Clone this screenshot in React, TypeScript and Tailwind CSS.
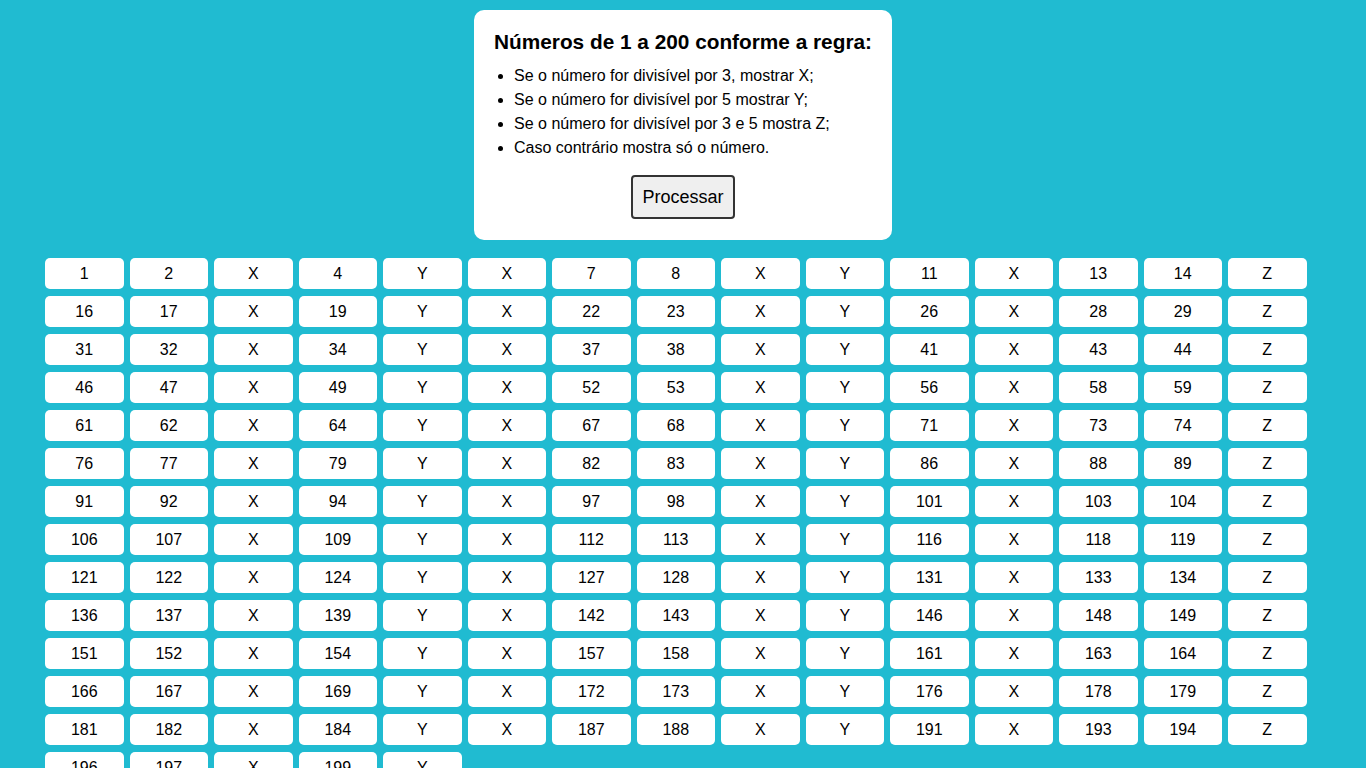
const rules = [
  'Se o número for divisível por 3, mostrar X;',
  'Se o número for divisível por 5 mostrar Y;',
  'Se o número for divisível por 3 e 5 mostra Z;',
  'Caso contrário mostra só o número.',
]

function label(n: number) {
  if (n % 15 === 0) return 'Z'
  if (n % 3 === 0) return 'X'
  if (n % 5 === 0) return 'Y'
  return String(n)
}

const numbers = Array.from({ length: 200 }, (_, i) => i + 1)

export default function App() {
  return (
    <div className="min-h-screen bg-[#20bbd1] pt-[10px] pb-10 font-['Liberation_Sans',Arial,sans-serif] text-black">
      <div className="mx-auto w-fit rounded-[10px] bg-white px-5 pt-[20px] pb-[21px]">
        <h3 className="whitespace-nowrap text-[20.8px] font-bold leading-[24px]">Números de 1 a 200 conforme a regra:</h3>
        <ul className="mt-[10px] list-disc pl-5 text-[16px] leading-[24px]">
          {rules.map((rule) => (
            <li key={rule}>{rule}</li>
          ))}
        </ul>
        <div className="mt-[15px] flex justify-center">
          <button className="h-[44px] w-[104px] rounded-[4px] border-2 border-[#333] bg-[#efefef] text-[18px]">
            Processar
          </button>
        </div>
      </div>

      <div className="mt-[18px] ml-[45px] grid grid-cols-[repeat(15,78.5px)] gap-x-[6px] gap-y-[7px]">
        {numbers.map((n) => (
          <div key={n} className="flex h-[31px] items-center justify-center rounded-[5px] bg-white text-[16px]">
            {label(n)}
          </div>
        ))}
      </div>
    </div>
  )
}
